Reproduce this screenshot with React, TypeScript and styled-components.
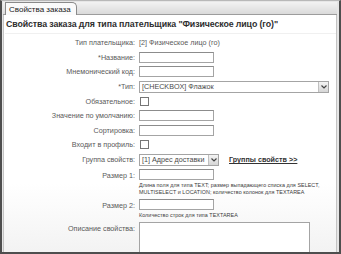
import styled, { createGlobalStyle } from "styled-components";

const GlobalStyle = createGlobalStyle`
  html, body {
    margin: 0;
    padding: 0;
    background: #ffffff;
  }
  * {
    box-sizing: border-box;
  }
`;

const Frame = styled.div`
  width: 341px;
  height: 254px;
  border: 2px solid #4e4e4e;
  border-top: 1px solid #b8b8b8;
  background: #e6e6e6;
  padding: 1px 2px 1px 1px;
  display: flex;
  flex-direction: column;
  font-family: "Liberation Sans", Arial, sans-serif;
  overflow: hidden;
`;

const TabBar = styled.div`
  height: 15px;
  display: flex;
  align-items: flex-end;
  padding-left: 2px;
  background: linear-gradient(#f2f2f2, #dadada);
  border-bottom: 1px solid #9c9c9c;
`;

const Tab = styled.div`
  height: 13px;
  padding: 0 5px 0 3px;
  display: flex;
  align-items: center;
  background: #fafafa;
  border: 1px solid #8a8a8a;
  border-bottom: none;
  border-top-right-radius: 5px;
  font-size: 8px;
  color: #222;
  margin-bottom: -1px;
`;

const Panel = styled.div`
  flex: 1;
  border: 1px solid #c4c4c4;
  border-top: none;
  background: linear-gradient(#ffffff 70%, #f2f2f2);
  padding: 3px 0 0 1px;
`;

const Heading = styled.div`
  font-size: 8.8px;
  font-weight: bold;
  color: #2e2e2e;
  padding: 1px 0 4px 1px;
  border-bottom: 1px solid #f0f0f0;
  margin-bottom: 3px;
  letter-spacing: -0.1px;
`;

const Form = styled.div`
  display: grid;
  grid-template-columns: 130px 1fr;
  column-gap: 4px;
  row-gap: 3px;
  align-items: center;
`;

const Label = styled.div<{ $top?: boolean }>`
  text-align: right;
  font-size: 7.2px;
  color: #5a5a5a;
  white-space: nowrap;
  align-self: ${({ $top }) => ($top ? "start" : "center")};
  padding-top: ${({ $top }) => ($top ? "2px" : "0")};
`;

const Value = styled.div`
  display: flex;
  align-items: center;
  gap: 10px;
  font-size: 7.2px;
  color: #5a5a5a;
  min-height: 11.5px;
`;

const Field = styled.div`
  display: flex;
  flex-direction: column;
  gap: 2px;
`;

const TextInput = styled.input<{ $w?: number }>`
  width: ${({ $w = 75 }) => $w}px;
  height: 11px;
  border: 1px solid #a4a4a4;
  border-top-color: #8c8c8c;
  background: #fff;
  padding: 0;
  margin: 0;
  display: block;
`;

const SelectBox = styled.div<{ $w: number }>`
  position: relative;
  width: ${({ $w }) => $w}px;
  height: 12px;
  border: 1px solid #a4a4a4;
  background: #fff;
  display: flex;
  align-items: center;
  padding-left: 2px;
  font-size: 7.2px;
  color: #4a4a4a;
  white-space: nowrap;
  overflow: hidden;
`;

const SelectArrow = styled.div`
  position: absolute;
  right: 0;
  top: 0;
  width: 10px;
  height: 10px;
  background: linear-gradient(#f4f4f4, #d6d6d6);
  border-left: 1px solid #c0c0c0;
  display: flex;
  align-items: center;
  justify-content: center;
`;

const Checkbox = styled.div<{ $offset?: number }>`
  width: 9px;
  height: 9px;
  border: 1px solid #767676;
  background: #fff;
  margin-left: ${({ $offset = 0 }) => $offset}px;
`;

const GroupLink = styled.a`
  font-size: 7.2px;
  font-weight: bold;
  color: #333;
  text-decoration: underline;
`;

const Hint = styled.div`
  font-size: 5.4px;
  color: #3a3a3a;
  line-height: 7px;
  letter-spacing: 0.05px;
`;

const TextArea = styled.textarea`
  width: 171px;
  height: 34px;
  border: 1px solid #a4a4a4;
  background: #fff;
  resize: none;
  padding: 0;
  margin: 0;
  display: block;
`;

const Arrow = () => (
  <SelectArrow>
    <svg width="6" height="4" viewBox="0 0 6 4">
      <path d="M0.5 0.5 L3 3 L5.5 0.5" fill="none" stroke="#444" strokeWidth="1.2" />
    </svg>
  </SelectArrow>
);

export default function App() {
  return (
    <>
      <GlobalStyle />
      <Frame>
        <TabBar>
          <Tab>Свойства заказа</Tab>
        </TabBar>
        <Panel>
          <Heading>Свойства заказа для типа плательщика "Физическое лицо (го)"</Heading>
          <Form>
            <Label>Тип плательщика:</Label>
            <Value>[2] Физическое лицо (го)</Value>

            <Label>*Название:</Label>
            <Value>
              <TextInput />
            </Value>

            <Label>Мнемонический код:</Label>
            <Value>
              <TextInput />
            </Value>

            <Label>*Тип:</Label>
            <Value>
              <SelectBox $w={190}>
                [CHECKBOX] Флажок
                <Arrow />
              </SelectBox>
            </Value>

            <Label>Обязательное:</Label>
            <Value>
              <Checkbox $offset={1} />
            </Value>

            <Label>Значение по умолчанию:</Label>
            <Value>
              <TextInput />
            </Value>

            <Label>Сортировка:</Label>
            <Value>
              <TextInput />
            </Value>

            <Label>Входит в профиль:</Label>
            <Value>
              <Checkbox $offset={1} />
            </Value>

            <Label>Группа свойств:</Label>
            <Value>
              <SelectBox $w={80}>
                [1] Адрес доставки
                <Arrow />
              </SelectBox>
              <GroupLink href="#">Группы свойств &gt;&gt;</GroupLink>
            </Value>

            <Label $top>Размер 1:</Label>
            <Field>
              <TextInput />
              <Hint>
                Длина поля для типа TEXT; размер выпадающего списка для SELECT,
                <br />
                MULTISELECT и LOCATION; количество колонок для TEXTAREA
              </Hint>
            </Field>

            <Label $top>Размер 2:</Label>
            <Field>
              <TextInput />
              <Hint>Количество строк для типа TEXTAREA</Hint>
            </Field>

            <Label $top>Описание свойства:</Label>
            <Value>
              <TextArea />
            </Value>
          </Form>
        </Panel>
      </Frame>
    </>
  );
}
